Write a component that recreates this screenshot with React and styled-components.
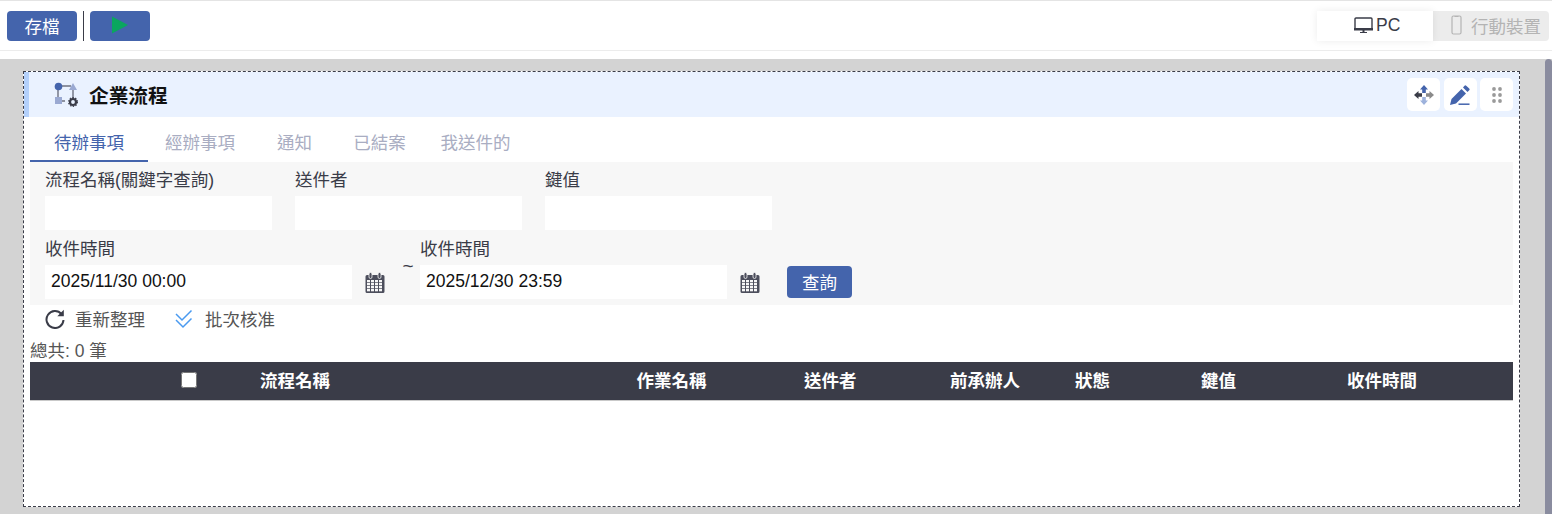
import React from "react";
import styled, { createGlobalStyle } from "styled-components";

const Global = createGlobalStyle`
  html, body { margin: 0; padding: 0; background: #fff; overflow: hidden; }
  * { box-sizing: border-box; }
  body { font-family: "Liberation Sans", "Noto Sans CJK TC", sans-serif; font-size: 17.5px; color: #3a3c48; }
`;

const Page = styled.div`width: 1552px; height: 514px; display: flex; flex-direction: column;`;
const Toolbar = styled.div`
  height: 51px; border-top: 1px solid #e4e4e4; border-bottom: 1px solid #ececec;
  display: flex; align-items: flex-start; padding: 10px 3px 0 7px; flex-shrink: 0;
`;
const PrimaryButton = styled.button`
  height: 30px; width: ${p => p.$w}px; border: 0; border-radius: 4px; background: #4464ac; color: #fff;
  font: inherit; font-size: 17.5px; padding: 0 0 2px; display: flex; align-items: center; justify-content: center;
`;
const Divider = styled.div`width: 1px; height: 30px; background: #3a3c48; margin: 0 6px;`;
const Spacer = styled.div`flex: 1;`;
const DeviceSwitch = styled.div`display: flex; height: 30px; background: #ececec; border-radius: 0 4px 4px 0;`;
const DeviceTab = styled.div`
  width: 116px; display: flex; align-items: center; padding: 0 0 2px ${p => p.$pad}px; gap: ${p => p.$gap}px;
  color: ${p => p.$active ? "#3a3c48" : "#b4b4b4"};
  background: ${p => p.$active ? "#fff" : "transparent"};
  box-shadow: ${p => p.$active ? "0 0 8px rgba(0,0,0,.08)" : "none"};
`;
const Gap = styled.div`height: 8px; flex-shrink: 0;`;
const Workspace = styled.div`flex: 1; min-height: 0; display: flex; background: #d3d3d3;`;
const Canvas = styled.div`flex: 1; padding: 12px 25px 7px 23px; display: flex; min-width: 0;`;
const Scrollbar = styled.div`width: 7px; background: #8a8c9f; border-radius: 4px 4px 0 0;`;
const Card = styled.div`flex: 1; border: 1px dashed #3a3c48; background: #fff; display: flex; flex-direction: column; min-width: 0;`;
const CardHeader = styled.div`
  height: 45px; background: #eaf2ff; border-left: 5px solid #b3d0fb; display: flex; align-items: center;
  padding: 0 6px 0 25px; flex-shrink: 0;
`;
const CardTitle = styled.div`font-size: 19.7px; font-weight: 700; color: #111; margin-left: 9px; flex: 1; padding-bottom: 1px;`;
const HeaderActions = styled.div`display: flex; gap: 3.5px;`;
const ActionButton = styled.div`
  width: 33px; height: 33px; background: #fff; border-radius: 5px; display: flex; align-items: center; justify-content: center;
`;
const Body = styled.div`padding: 0 6px; display: flex; flex-direction: column;`;
const Tabs = styled.div`height: 45px; display: flex; flex-shrink: 0;`;
const Tab = styled.div`
  width: ${p => p.$w}px; display: flex; align-items: center; justify-content: center; padding-top: 6px;
  color: ${p => p.$active ? "#4464ac" : "#a9adc2"};
  border-bottom: 2px solid ${p => p.$active ? "#4464ac" : "transparent"};
`;
const Filter = styled.div`background: #f7f7f7; height: 143px; padding: 5px 15px 0; display: flex; flex-direction: column; gap: 5px;`;
const FilterRow = styled.div`display: flex; align-items: flex-start; height: 64px;`;
const Field = styled.div`width: ${p => p.$w}px; margin-right: ${p => p.$mr || 0}px; display: flex; flex-direction: column;`;
const Label = styled.label`height: 29px; line-height: 27px; color: #3a3c48; white-space: nowrap;`;
const Input = styled.div`height: 34px; background: #fff; line-height: 33px; padding-left: 6px; color: #111;`;
const CalendarSlot = styled.div`width: 46px; height: 34px; margin-top: 29px; display: flex; align-items: center; justify-content: center;`;
const Tilde = styled.div`width: 22px; margin-top: 19px; padding-right: 2px; text-align: center; font-size: 19px;`;
const QueryButton = styled(PrimaryButton)`margin-top: 30px; margin-left: 14px; height: 32px; font-size: 17.5px;`;
const ActionBar = styled.div`height: 30px; display: flex; align-items: center; padding: 0 0 3px 15px; color: #555;`;
const ActionItem = styled.div`display: flex; align-items: center; gap: ${p => p.$gap}px; margin-right: 30px;`;
const Total = styled.div`height: 27px; line-height: 32px; color: #555;`;
const TableHead = styled.div`
  height: 39px; background: #3a3c48; border-bottom: 1px solid #c9c9c9;
  display: grid; grid-template-columns: 230px 376.5px 167.5px 146px 125px 126px 146px 1fr; align-items: center;
  color: #fff; font-weight: 700;
`;
const HeadCell = styled.div`white-space: nowrap; padding-bottom: 4px;`;
const CheckCell = styled.div`display: flex; padding-left: 151px; padding-bottom: 3px;`;
const Check = styled.input`width: 16px; height: 16px; margin: 0;`;

const Monitor = () => (
  <svg width="19" height="18" viewBox="0 0 19 18"><rect x="1" y="2" width="17" height="11" rx="1" fill="none" stroke="#3a3c48" strokeWidth="1.4"/><rect x="0" y="12" width="19" height="2.5" fill="#3a3c48"/><path d="M6 16h7v1H6z" fill="#3a3c48"/><path d="M8.5 14h2v2h-2z" fill="#3a3c48"/></svg>
);
const Phone = () => (
  <svg width="11" height="20" viewBox="0 0 11 20"><rect x="1" y="1" width="9" height="18" rx="1.5" fill="none" stroke="#b4b4b4" strokeWidth="1.2"/><path d="M3.5 1.5h4" stroke="#b4b4b4"/></svg>
);
const Play = () => <svg width="18" height="20" viewBox="0 0 18 20"><path d="M1 1.5L17 10 1 18.5z" fill="#0aa65f"/></svg>;
const FlowIcon = () => (
  <svg width="26" height="26" viewBox="0 0 26 26">
    <path d="M4 4h13M4 4v15h7" stroke="#6d7180" strokeWidth="1.4" fill="none"/>
    <path d="M19 8v9" stroke="#6d7180" strokeWidth="1.4"/>
    <circle cx="4.5" cy="4.5" r="3.8" fill="#4464ac"/>
    <path d="M19 1l4 7h-8z" fill="#9aa9d2"/>
    <rect x="1" y="15" width="7" height="7" fill="#9aa9d2"/>
    <circle cx="19" cy="20" r="3" fill="none" stroke="#3a3c48" strokeWidth="2.2"/>
    <circle cx="19" cy="20" r="4.4" fill="none" stroke="#3a3c48" strokeWidth="1.2" strokeDasharray="1.4 1.4"/>
  </svg>
);
const MoveIcon = () => (
  <svg width="20" height="20" viewBox="0 0 20 20">
    <path d="M10 0l4 4.500h-2.200v3.500H8.200V4.500H6z" fill="#4464ac"/>
    <path d="M10 20l4-4.500h-2.200V12H8.200v3.500H6z" fill="#9db2dc"/>
    <path d="M0 10l4.500-4v2.200H8v3.600H4.500V14z" fill="#3a3c48"/>
    <path d="M20 10l-4.500-4v2.200H12v3.600h3.500V14z" fill="#8a8a8a"/>
  </svg>
);
const PenIcon = () => (
  <svg width="20" height="20" viewBox="0 0 20 20">
    <path d="M0 20l1.5-6L11.5 4l4.5 4.500L6 18.500z" fill="#4464ac"/>
    <path d="M13 2.500l1.500-1.800a1.200 1.200 0 0 1 1.700 0l3 2.900a1.200 1.200 0 0 1 0 1.700L17.500 7z" fill="#4464ac"/>
    <path d="M8.500 19.200h11" stroke="#4464ac" strokeWidth="1.500"/>
  </svg>
);
const DotsIcon = () => (
  <svg width="10" height="16" viewBox="0 0 10 16" fill="#9a9a9a">
    {[2, 8, 14].flatMap(y => [2, 8].map(x => <circle key={`${x}-${y}`} cx={x} cy={y} r="1.9"/>))}
  </svg>
);
const CalendarIcon = () => (
  <svg width="20" height="21" viewBox="0 0 20 21">
    <path d="M2 3h16a1.5 1.5 0 0 1 1.5 1.5v15A1.5 1.5 0 0 1 18 21H2a1.5 1.5 0 0 1-1.5-1.5v-15A1.5 1.5 0 0 1 2 3z" fill="#4c4e5c"/>
    <rect x="4" y="0.5" width="3" height="6" rx="1.5" fill="#4c4e5c" stroke="#f7f7f7" strokeWidth=".8"/>
    <rect x="13" y="0.5" width="3" height="6" rx="1.5" fill="#4c4e5c" stroke="#f7f7f7" strokeWidth=".8"/>
    {[8, 11, 14, 17].flatMap(y => [2, 6, 10, 14].map(x => <rect key={`${x}-${y}`} x={x} y={y} width="3" height="2.3" fill="#f7f7f7"/>))}
  </svg>
);
const RefreshIcon = () => (
  <svg width="20" height="20" viewBox="0 0 20 20"><path d="M16.5 5A8.5 8.5 0 1 0 18.5 11" fill="none" stroke="#3a3c48" strokeWidth="2"/><path d="M18.8 0.8v6.5h-6.5z" fill="#3a3c48"/></svg>
);
const DoubleCheck = () => (
  <svg width="18" height="20" viewBox="0 0 18 20"><path d="M1 5l6 6L16.5 1.5M1 11l7 7 8.5-8.5" fill="none" stroke="#4a9af0" strokeWidth="1.5"/></svg>
);

const heads = ["流程名稱", "作業名稱", "送件者", "前承辦人", "狀態", "鍵值", "收件時間"];

export default function App() {
  return (
    <Page>
      <Global />
      <Toolbar>
        <PrimaryButton $w={70}>存檔</PrimaryButton>
        <Divider />
        <PrimaryButton $w={60}><Play /></PrimaryButton>
        <Spacer />
        <DeviceSwitch>
          <DeviceTab $active $pad={37} $gap={3}><Monitor />PC</DeviceTab>
          <DeviceTab $pad={18} $gap={9}><Phone />行動裝置</DeviceTab>
        </DeviceSwitch>
      </Toolbar>
      <Gap />
      <Workspace>
        <Canvas>
          <Card>
            <CardHeader>
              <FlowIcon />
              <CardTitle>企業流程</CardTitle>
              <HeaderActions>
                <ActionButton><MoveIcon /></ActionButton>
                <ActionButton><PenIcon /></ActionButton>
                <ActionButton><DotsIcon /></ActionButton>
              </HeaderActions>
            </CardHeader>
            <Body>
              <Tabs>
                <Tab $active $w={118}>待辦事項</Tab>
                <Tab $w={104}>經辦事項</Tab>
                <Tab $w={85}>通知</Tab>
                <Tab $w={85}>已結案</Tab>
                <Tab $w={107}>我送件的</Tab>
              </Tabs>
              <Filter>
                <FilterRow>
                  <Field $w={227} $mr={23}><Label>流程名稱(關鍵字查詢)</Label><Input /></Field>
                  <Field $w={227} $mr={23}><Label>送件者</Label><Input /></Field>
                  <Field $w={227}><Label>鍵值</Label><Input /></Field>
                </FilterRow>
                <FilterRow>
                  <Field $w={307}><Label>收件時間</Label><Input>2025/11/30 00:00</Input></Field>
                  <CalendarSlot><CalendarIcon /></CalendarSlot>
                  <Tilde>~</Tilde>
                  <Field $w={307}><Label>收件時間</Label><Input>2025/12/30 23:59</Input></Field>
                  <CalendarSlot><CalendarIcon /></CalendarSlot>
                  <QueryButton $w={65}>查詢</QueryButton>
                </FilterRow>
              </Filter>
              <ActionBar>
                <ActionItem $gap={10}><RefreshIcon />重新整理</ActionItem>
                <ActionItem $gap={12}><DoubleCheck />批次核准</ActionItem>
              </ActionBar>
              <Total>總共: 0 筆</Total>
              <TableHead>
                <CheckCell><Check type="checkbox" /></CheckCell>
                {heads.map(h => <HeadCell key={h}>{h}</HeadCell>)}
              </TableHead>
            </Body>
          </Card>
        </Canvas>
        <Scrollbar />
      </Workspace>
    </Page>
  );
}
